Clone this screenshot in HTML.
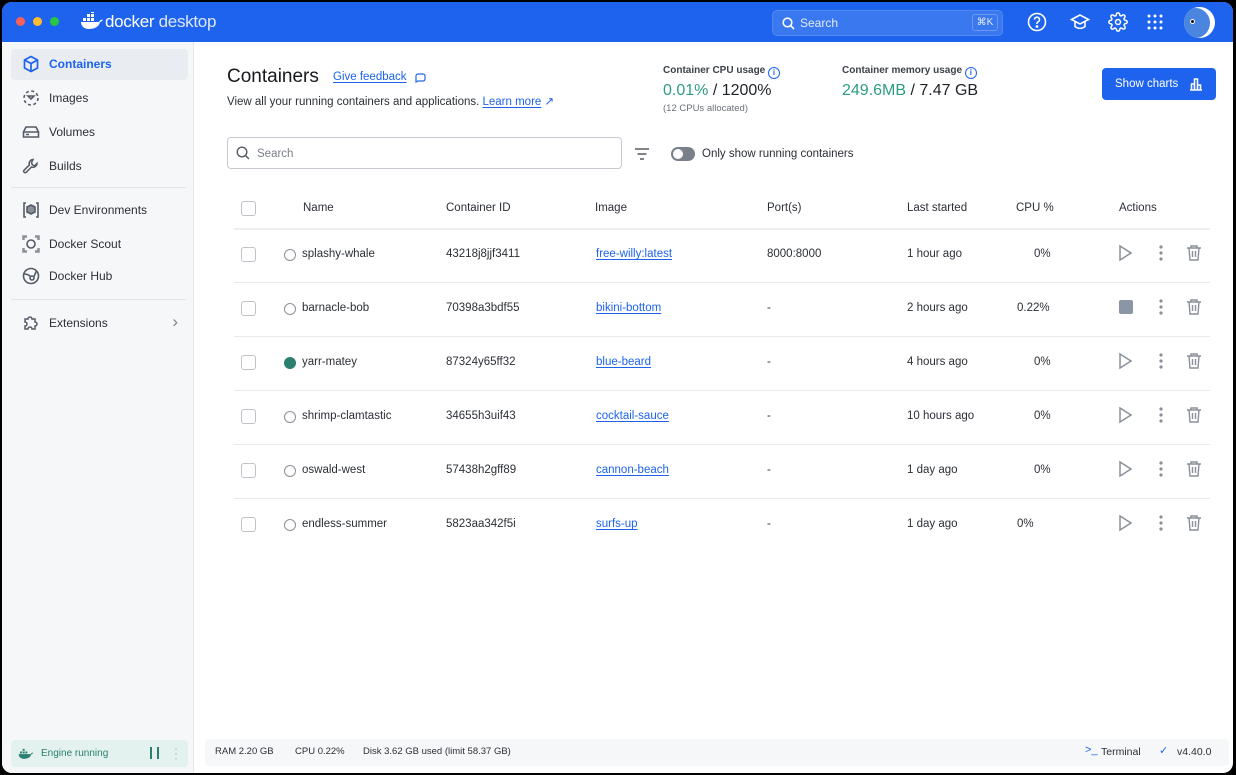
<!DOCTYPE html>
<html><head><meta charset="utf-8"><style>
*{box-sizing:border-box;margin:0;padding:0}
body{width:1236px;height:775px;background:#000;font-family:"Liberation Sans",sans-serif;color:#1f2328;overflow:hidden;position:relative}
.win{position:absolute;left:2px;top:2px;width:1231px;height:771px;border-radius:10px;overflow:hidden;background:#fff}
.top{position:absolute;left:0;top:0;right:0;height:40px;background:#1d63ed}
.dot{position:absolute;top:15px;width:9px;height:9px;border-radius:50%}
.side{position:absolute;left:0;top:40px;width:192px;bottom:0;background:#f6f7f9;border-right:1px solid #e3e5e8}
.nav{position:absolute;left:9px;width:177px;height:30px;font-size:12px;display:flex;align-items:center;padding-left:38px;color:#2b2f36}
.nav svg{position:absolute;left:11px;top:6px}
.hr{position:absolute;left:9px;width:175px;height:1px;background:#e1e3e6}
.a{position:absolute;white-space:nowrap}
.lnk,.row.lnk{color:#1d63ed;text-decoration:underline;text-underline-offset:2px}
.cb{position:absolute;width:15px;height:15px;border:1px solid #bfc3c8;border-radius:3px;background:#fff}
.row{font-size:11.5px;color:#2b2f36}
.sep{position:absolute;left:232px;width:976px;height:1px;background:#e8eaed}
.circ{position:absolute;width:12px;height:12px;border:1px solid #8a9099;border-radius:50%}
</style></head><body><div class="win">
<div class="top">
<div class="dot" style="left:14px;background:#fe5f57"></div>
<div class="dot" style="left:31px;background:#febc2e"></div>
<div class="dot" style="left:48px;background:#28c840"></div>
<svg class="a" style="left:78px;top:10px" width="24" height="18" viewBox="0 0 24 18"><g fill="#fff"><rect x="3" y="6" width="3" height="3"/><rect x="7" y="6" width="3" height="3"/><rect x="11" y="6" width="3" height="3"/><rect x="7" y="2" width="3" height="3"/><rect x="11" y="2" width="3" height="3"/><rect x="11" y="-1" width="3" height="2"/><path d="M1 10h18c1-2 3-3 4-2-1 1-2 2-3 2-1 5-6 7-11 7-5 0-8-3-8-7z"/></g></svg>
<div class="a" style="left:103px;top:10px;font-size:17px;color:#fff;letter-spacing:-0.3px">docker<span style="opacity:.85;font-weight:300"> desktop</span></div>
<div class="a" style="left:770px;top:8px;width:231px;height:26px;border-radius:5px;background:#3a78ef;border:1px solid #5088f0"></div>
<svg class="a" style="left:780px;top:15px" width="13" height="13" viewBox="0 0 13 13" fill="none" stroke="#fff" stroke-width="1.6"><circle cx="5.5" cy="5.5" r="4.3"/><path d="M8.7 8.7l3.3 3.3"/></svg>
<div class="a" style="left:798px;top:14px;font-size:12px;color:#e4ecfd">Search</div>
<div class="a" style="left:970px;top:12px;width:26px;height:17px;border:1px solid #6a98f2;border-radius:3px;font-size:10px;color:#e4ecfd;text-align:center;line-height:15px">⌘K</div>
<svg class="a" style="left:1025px;top:10px" width="20" height="20" viewBox="0 0 20 20" fill="none" stroke="#fff" stroke-width="1.6"><circle cx="10" cy="10" r="8.5"/><path d="M7.5 7.6a2.5 2.5 0 1 1 3.3 2.4c-.6.3-.8.7-.8 1.4v.6"/><circle cx="10" cy="14.5" r=".6" fill="#fff"/></svg>
<svg class="a" style="left:1068px;top:11px" width="20" height="18" viewBox="0 0 20 18" fill="none" stroke="#fff" stroke-width="1.6"><path d="M10 2L1.5 6.5 10 11l8.5-4.5z"/><path d="M5 8.5v5c3 2.5 7 2.5 10 0v-5"/></svg>
<svg class="a" style="left:1106px;top:10px" width="20" height="20" viewBox="0 0 24 24" fill="none" stroke="#fff" stroke-width="1.8"><circle cx="12" cy="12" r="3"/><path d="M19.4 15a1.7 1.7 0 0 0 .3 1.8l.1.1a2 2 0 1 1-2.8 2.8l-.1-.1a1.7 1.7 0 0 0-1.8-.3 1.7 1.7 0 0 0-1 1.500V21a2 2 0 1 1-4 0v-.1a1.7 1.7 0 0 0-1.1-1.5 1.7 1.7 0 0 0-1.8.3l-.1.1a2 2 0 1 1-2.8-2.8l.1-.1a1.7 1.7 0 0 0 .3-1.8 1.7 1.7 0 0 0-1.5-1H3a2 2 0 1 1 0-4h.1a1.7 1.7 0 0 0 1.5-1.1 1.7 1.7 0 0 0-.3-1.8l-.1-.1a2 2 0 1 1 2.8-2.8l.1.1a1.7 1.7 0 0 0 1.8.3H9a1.7 1.7 0 0 0 1-1.5V3a2 2 0 1 1 4 0v.1a1.7 1.7 0 0 0 1 1.5 1.7 1.7 0 0 0 1.8-.3l.1-.1a2 2 0 1 1 2.8 2.8l-.1.1a1.7 1.7 0 0 0-.3 1.8V9a1.7 1.7 0 0 0 1.5 1H21a2 2 0 1 1 0 4h-.1a1.7 1.7 0 0 0-1.5 1z"/></svg>
<svg class="a" style="left:1145px;top:12px" width="16" height="16" viewBox="0 0 16 16" fill="#fff"><circle cx="2" cy="2" r="1.5"/><circle cx="8" cy="2" r="1.5"/><circle cx="14" cy="2" r="1.5"/><circle cx="2" cy="8" r="1.5"/><circle cx="8" cy="8" r="1.5"/><circle cx="14" cy="8" r="1.5"/><circle cx="2" cy="14" r="1.5"/><circle cx="8" cy="14" r="1.5"/><circle cx="14" cy="14" r="1.5"/></svg>
<div class="a" style="left:1182px;top:5px;width:31px;height:31px;border-radius:50%;background:#fff;overflow:hidden"><div style="position:absolute;left:-3px;top:1px;width:29px;height:30px;border-radius:50%;background:#4a86e0"></div><div style="position:absolute;left:6px;top:12px;width:5px;height:5px;border-radius:50%;background:#fff"></div><div style="position:absolute;left:7px;top:13px;width:3px;height:3px;border-radius:50%;background:#111"></div></div>
</div>

<div class="side">
<div class="a" style="left:9px;top:7px;width:177px;height:31px;background:#e9ecf0;border-radius:4px"></div>
<div class="nav" style="top:7px;color:#1d63ed;font-weight:bold"><svg width="18" height="18" viewBox="0 0 18 18" fill="none" stroke="#1d63ed" stroke-width="1.7"><path d="M9 1.5l6.5 3.5v8L9 16.5 2.5 13V5z"/><path d="M2.5 5L9 8.5 15.5 5M9 8.5v8"/></svg>Containers</div>
<div class="nav" style="top:41px"><svg width="18" height="18" viewBox="0 0 18 18" fill="none" stroke="#555b66" stroke-width="1.6" stroke-dasharray="3 2.5"><circle cx="9" cy="9" r="7"/><path d="M6 7h6L9 10z" stroke-dasharray="none"/></svg>Images</div>
<div class="nav" style="top:75px"><svg width="18" height="18" viewBox="0 0 18 18" fill="none" stroke="#555b66" stroke-width="1.6"><path d="M4 4h10l2.5 5v5h-15V9z"/><path d="M1.5 9h15M4 11.5h3"/></svg>Volumes</div>
<div class="nav" style="top:109px"><svg width="18" height="18" viewBox="0 0 18 18" fill="none" stroke="#555b66" stroke-width="1.5"><path d="M11 2.5a4 4 0 0 0-3.6 5.4L2 13.3a1.5 1.5 0 0 0 2.1 2.1l5.4-5.4A4 4 0 0 0 15 6.5l-2.3 2.3-2.3-.9-.9-2.3z"/></svg>Builds</div>
<div class="hr" style="top:145px"></div>
<div class="nav" style="top:153px"><svg width="18" height="18" viewBox="0 0 18 18" fill="none" stroke="#555b66" stroke-width="1.6"><path d="M9 4l4 2v5l-4 2-4-2V6z" fill="#8a9099"/><path d="M4 2H2v14h2M14 2h2v14h-2"/></svg>Dev Environments</div>
<div class="nav" style="top:187px"><svg width="18" height="18" viewBox="0 0 18 18" fill="none" stroke="#555b66" stroke-width="1.6"><circle cx="9" cy="9" r="4"/><path d="M1.5 5V1.5H5M13 1.5h3.5V5M16.5 13v3.5H13M5 16.5H1.5V13" stroke="#8a9099" stroke-width="2.5"/></svg>Docker Scout</div>
<div class="nav" style="top:219px"><svg width="18" height="18" viewBox="0 0 18 18" fill="none" stroke="#555b66" stroke-width="1.6"><circle cx="9" cy="9" r="7.5"/><circle cx="10" cy="11" r="2"/><path d="M2 7c3 0 5 1 6.5 2.5M12 9.5C13 7 14 5 14.5 4"/></svg>Docker Hub</div>
<div class="hr" style="top:257px"></div>
<div class="nav" style="top:266px"><svg width="18" height="18" viewBox="0 0 18 18" fill="none" stroke="#555b66" stroke-width="1.5"><path d="M3 5h3a2 2 0 1 1 4 0h3v3a2 2 0 1 1 0 4v3h-3a2 2 0 1 0-4 0H3v-3a2 2 0 1 0 0-4z"/></svg>Extensions<span style="position:absolute;right:10px;top:4px;color:#7a808a;font-size:17px">&#x203A;</span></div>
<div class="a" style="left:9px;top:698px;width:177px;height:27px;background:#e3f2ef;border-radius:4px"></div>
<svg class="a" style="left:16px;top:705px" width="16" height="13" viewBox="0 0 24 18"><g fill="#2a7f6f"><rect x="3" y="6" width="3" height="3"/><rect x="7" y="6" width="3" height="3"/><rect x="11" y="6" width="3" height="3"/><rect x="7" y="2" width="3" height="3"/><path d="M1 10h18c1-2 3-3 4-2-1 1-2 2-3 2-1 5-6 7-11 7-5 0-8-3-8-7z"/></g></svg>
<div class="a" style="left:39px;top:706px;font-size:10px;color:#2a7f6f">Engine running</div>
<div class="a" style="left:148px;top:705px;width:2px;height:12px;background:#2a7f6f"></div>
<div class="a" style="left:155px;top:705px;width:2px;height:12px;background:#2a7f6f"></div>
<div class="a" style="left:172px;top:704px;color:#8fbfb5;font-size:12px;line-height:5px">·<br>·<br>·</div>
</div>

<div class="a" style="left:225px;top:64px;font-size:19px;color:#17191c">Containers</div>
<div class="a lnk" style="left:331px;top:69px;font-size:11.5px">Give feedback</div>
<svg class="a" style="left:412px;top:70px" width="12" height="12" viewBox="0 0 12 12" fill="none" stroke="#1d63ed" stroke-width="1.2"><path d="M2 10V4a2 2 0 0 1 2-2h5a2 2 0 0 1 2 2v3a2 2 0 0 1-2 2H4z"/></svg>
<div class="a" style="left:225px;top:92px;font-size:11.5px;color:#2b2f36">View all your running containers and applications. <span class="lnk">Learn more</span> <span style="color:#1d63ed">↗</span></div>

<div class="a" style="left:661px;top:63px;font-size:10px;font-weight:bold;color:#3d424a">Container CPU usage <span style="display:inline-block;width:12px;height:12px;border:1px solid #1d63ed;border-radius:50%;color:#1d63ed;font-size:8px;text-align:center;line-height:10px;vertical-align:-2px">i</span></div>
<div class="a" style="left:661px;top:80px;font-size:16px"><span style="color:#2e9c80">0.01%</span> / 1200%</div>
<div class="a" style="left:661px;top:101px;font-size:9.5px;color:#6b717a">(12 CPUs allocated)</div>
<div class="a" style="left:840px;top:63px;font-size:10px;font-weight:bold;color:#3d424a">Container memory usage <span style="display:inline-block;width:12px;height:12px;border:1px solid #1d63ed;border-radius:50%;color:#1d63ed;font-size:8px;text-align:center;line-height:10px;vertical-align:-2px">i</span></div>
<div class="a" style="left:840px;top:80px;font-size:16px"><span style="color:#2e9c80">249.6MB</span> / 7.47 GB</div>
<div class="a" style="left:1100px;top:66px;width:114px;height:32px;background:#1d63ed;border-radius:4px;color:#fff;font-size:11.5px;line-height:32px;padding-left:13px">Show charts</div>
<svg class="a" style="left:1187px;top:75px" width="14" height="14" viewBox="0 0 14 14" fill="none" stroke="#fff" stroke-width="1.6"><path d="M1 13h12M2.5 13V7h3v6M5.5 13V2h3v11M8.5 13V8h3v5"/></svg>

<div class="a" style="left:225px;top:135px;width:395px;height:32px;border:1px solid #c6cad0;border-radius:4px"></div>
<svg class="a" style="left:234px;top:144px" width="14" height="14" viewBox="0 0 14 14" fill="none" stroke="#555b66" stroke-width="1.4"><circle cx="6" cy="6" r="4.8"/><path d="M9.5 9.5l3.5 3.5"/></svg>
<div class="a" style="left:255px;top:146px;font-size:11.5px;color:#7a808a">Search</div>
<svg class="a" style="left:632px;top:146px" width="16" height="12" viewBox="0 0 16 12" stroke="#555b66" stroke-width="1.5"><path d="M1 1h14M3.5 6h9M6 11h4"/></svg>
<div class="a" style="left:669px;top:145px;width:24px;height:14px;border-radius:7px;background:#7a808a"></div>
<div class="a" style="left:671px;top:147px;width:10px;height:10px;border-radius:50%;background:#fff"></div>
<div class="a" style="left:700px;top:146px;font-size:11.5px;color:#2b2f36">Only show running containers</div>

<div class="cb" style="left:239px;top:199px"></div>
<div class="a row" style="left:301px;top:200px">Name</div>
<div class="a row" style="left:444px;top:200px">Container ID</div>
<div class="a row" style="left:593px;top:200px">Image</div>
<div class="a row" style="left:765px;top:200px">Port(s)</div>
<div class="a row" style="left:905px;top:200px">Last started</div>
<div class="a row" style="left:1014px;top:200px">CPU %</div>
<div class="a row" style="left:1117px;top:200px">Actions</div>
<div class="sep" style="top:226px;height:2px;background:#eceef0"></div>

<div class="cb" style="left:239px;top:245px"></div><div class="circ" style="left:282px;top:247px"></div>
<div class="a row" style="left:300px;top:246px">splashy-whale</div><div class="a row" style="left:444px;top:246px">43218j8jjf3411</div><div class="a row lnk" style="left:594px;top:246px">free-willy:latest</div><div class="a row" style="left:765px;top:246px">8000:8000</div><div class="a row" style="left:905px;top:246px">1 hour ago</div><div class="a row" style="left:1032px;top:246px">0%</div>
<div class="sep" style="top:280px"></div>

<div class="cb" style="left:239px;top:299px"></div><div class="circ" style="left:282px;top:301px"></div>
<div class="a row" style="left:300px;top:300px">barnacle-bob</div><div class="a row" style="left:444px;top:300px">70398a3bdf55</div><div class="a row lnk" style="left:594px;top:300px">bikini-bottom</div><div class="a row" style="left:765px;top:300px">-</div><div class="a row" style="left:905px;top:300px">2 hours ago</div><div class="a row" style="left:1015px;top:300px">0.22%</div>
<div class="sep" style="top:334px"></div>

<div class="cb" style="left:239px;top:353px"></div><div class="circ" style="left:282px;top:355px;background:#2a7f6f;border-color:#2a7f6f"></div>
<div class="a row" style="left:300px;top:354px">yarr-matey</div><div class="a row" style="left:444px;top:354px">87324y65ff32</div><div class="a row lnk" style="left:594px;top:354px">blue-beard</div><div class="a row" style="left:765px;top:354px">-</div><div class="a row" style="left:905px;top:354px">4 hours ago</div><div class="a row" style="left:1032px;top:354px">0%</div>
<div class="sep" style="top:388px"></div>

<div class="cb" style="left:239px;top:407px"></div><div class="circ" style="left:282px;top:409px"></div>
<div class="a row" style="left:300px;top:408px">shrimp-clamtastic</div><div class="a row" style="left:444px;top:408px">34655h3uif43</div><div class="a row lnk" style="left:594px;top:408px">cocktail-sauce</div><div class="a row" style="left:765px;top:408px">-</div><div class="a row" style="left:905px;top:408px">10 hours ago</div><div class="a row" style="left:1032px;top:408px">0%</div>
<div class="sep" style="top:442px"></div>

<div class="cb" style="left:239px;top:461px"></div><div class="circ" style="left:282px;top:463px"></div>
<div class="a row" style="left:300px;top:462px">oswald-west</div><div class="a row" style="left:444px;top:462px">57438h2gff89</div><div class="a row lnk" style="left:594px;top:462px">cannon-beach</div><div class="a row" style="left:765px;top:462px">-</div><div class="a row" style="left:905px;top:462px">1 day ago</div><div class="a row" style="left:1032px;top:462px">0%</div>
<div class="sep" style="top:496px"></div>

<div class="cb" style="left:239px;top:515px"></div><div class="circ" style="left:282px;top:517px"></div>
<div class="a row" style="left:300px;top:516px">endless-summer</div><div class="a row" style="left:444px;top:516px">5823aa342f5i</div><div class="a row lnk" style="left:594px;top:516px">surfs-up</div><div class="a row" style="left:765px;top:516px">-</div><div class="a row" style="left:905px;top:516px">1 day ago</div><div class="a row" style="left:1015px;top:516px">0%</div>

<svg class="a" style="left:1108px;top:234px" width="110" height="310" viewBox="0 0 110 310">
<defs>
<g id="pl" fill="none" stroke="#8a9099" stroke-width="1.5"><path d="M10 10l11 7-11 7z"/></g>
<g id="dt" fill="#8a9099"><circle cx="51" cy="11" r="1.6"/><circle cx="51" cy="17" r="1.6"/><circle cx="51" cy="23" r="1.6"/></g>
<g id="tr" fill="none" stroke="#8a9099" stroke-width="1.4"><path d="M77 12h14M81 12v-2h6v2M79 12l1 12h8l1-12M82.5 15v6M85.5 15v6"/></g>
</defs>
<use href="#pl"/><use href="#dt"/><use href="#tr"/>
<g transform="translate(0,54)"><rect x="9" y="10" width="14" height="14" rx="2" fill="#8a95a6"/><use href="#dt"/><use href="#tr"/></g>
<g transform="translate(0,108)"><use href="#pl"/><use href="#dt"/><use href="#tr"/></g>
<g transform="translate(0,162)"><use href="#pl"/><use href="#dt"/><use href="#tr"/></g>
<g transform="translate(0,216)"><use href="#pl"/><use href="#dt"/><use href="#tr"/></g>
<g transform="translate(0,270)"><use href="#pl"/><use href="#dt"/><use href="#tr"/></g>
</svg>

<div class="a" style="left:203px;top:737px;width:1024px;height:27px;background:#f6f7f9;border-radius:4px"></div>
<div class="a" style="left:213px;top:744px;font-size:9.5px;color:#2b2f36">RAM 2.20 GB</div>
<div class="a" style="left:293px;top:744px;font-size:9.5px;color:#2b2f36">CPU 0.22%</div>
<div class="a" style="left:361px;top:744px;font-size:9.5px;color:#2b2f36">Disk 3.62 GB used (limit 58.37 GB)</div>
<div class="a" style="left:1083px;top:742px;font-size:11px;color:#1d63ed">&gt;_</div>
<div class="a" style="left:1099px;top:744px;font-size:10.5px;color:#2b2f36">Terminal</div>
<div class="a" style="left:1157px;top:742px;font-size:11px;color:#1d63ed">✓</div>
<div class="a" style="left:1175px;top:744px;font-size:10.5px;color:#2b2f36">v4.40.0</div>
</div></body></html>
